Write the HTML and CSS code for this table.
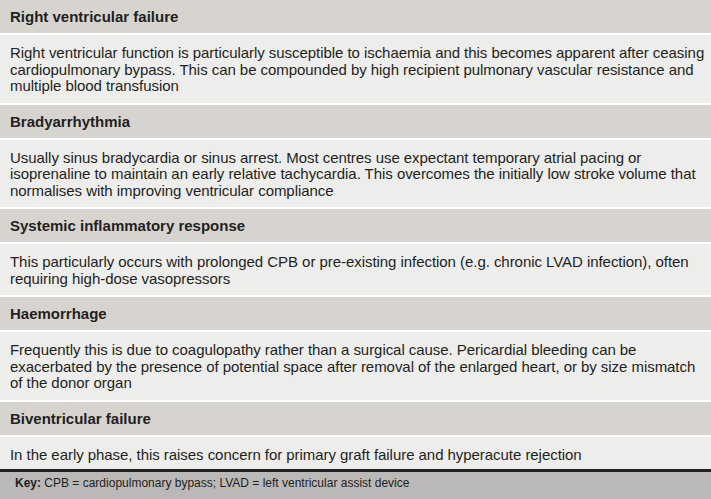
FILE: index.html
```html
<!DOCTYPE html>
<html>
<head>
<meta charset="utf-8">
<link rel="stylesheet" href="styles.css">
</head>
<body>
<div class="table">
  <div class="head">Right ventricular failure</div>
  <div class="body">Right ventricular function is particularly susceptible to ischaemia and this becomes apparent after ceasing cardiopulmonary bypass. This can be compounded by high recipient pulmonary vascular resistance and multiple blood transfusion</div>
  <div class="head">Bradyarrhythmia</div>
  <div class="body">Usually sinus bradycardia or sinus arrest. Most centres use expectant temporary atrial pacing or isoprenaline to maintain an early relative tachycardia. This overcomes the initially low stroke volume that normalises with improving ventricular compliance</div>
  <div class="head">Systemic inflammatory response</div>
  <div class="body">This particularly occurs with prolonged CPB or pre-existing infection (e.g. chronic LVAD infection), often requiring high-dose vasopressors</div>
  <div class="head">Haemorrhage</div>
  <div class="body">Frequently this is due to coagulopathy rather than a surgical cause. Pericardial bleeding can be exacerbated by the presence of potential space after removal of the enlarged heart, or by size mismatch of the donor organ</div>
  <div class="head">Biventricular failure</div>
  <div class="body last">In the early phase, this raises concern for primary graft failure and hyperacute rejection</div>
  <div class="key"><b>Key:</b> CPB = cardiopulmonary bypass; LVAD = left ventricular assist device</div>
</div>
</body>
</html>
```
FILE: styles.css
```css
html, body {
  margin: 0;
  padding: 0;
  background: #ffffff;
}
body {
  font-family: "Liberation Sans", Arial, sans-serif;
  color: #231f20;
}
.table {
  width: 711px;
  display: flex;
  flex-direction: column;
  gap: 2px;
}
.head {
  background: #d7d4d0;
  font-weight: bold;
  font-size: 15px;
  line-height: 17px;
  padding: 8px 4px 8px 10px;
}
.body {
  background: #ededeb;
  font-size: 15px;
  line-height: 16.5px;
  letter-spacing: -0.05px;
  padding: 10px 4px 8px 10px;
}
.body.last {
  padding-bottom: 6px;
}
.key {
  margin-top: -2px;
  background: #bab9b7;
  border-top: 3px solid #231f20;
  font-size: 12px;
  line-height: 14px;
  padding: 4px 15px 12px 15px;
}
```
